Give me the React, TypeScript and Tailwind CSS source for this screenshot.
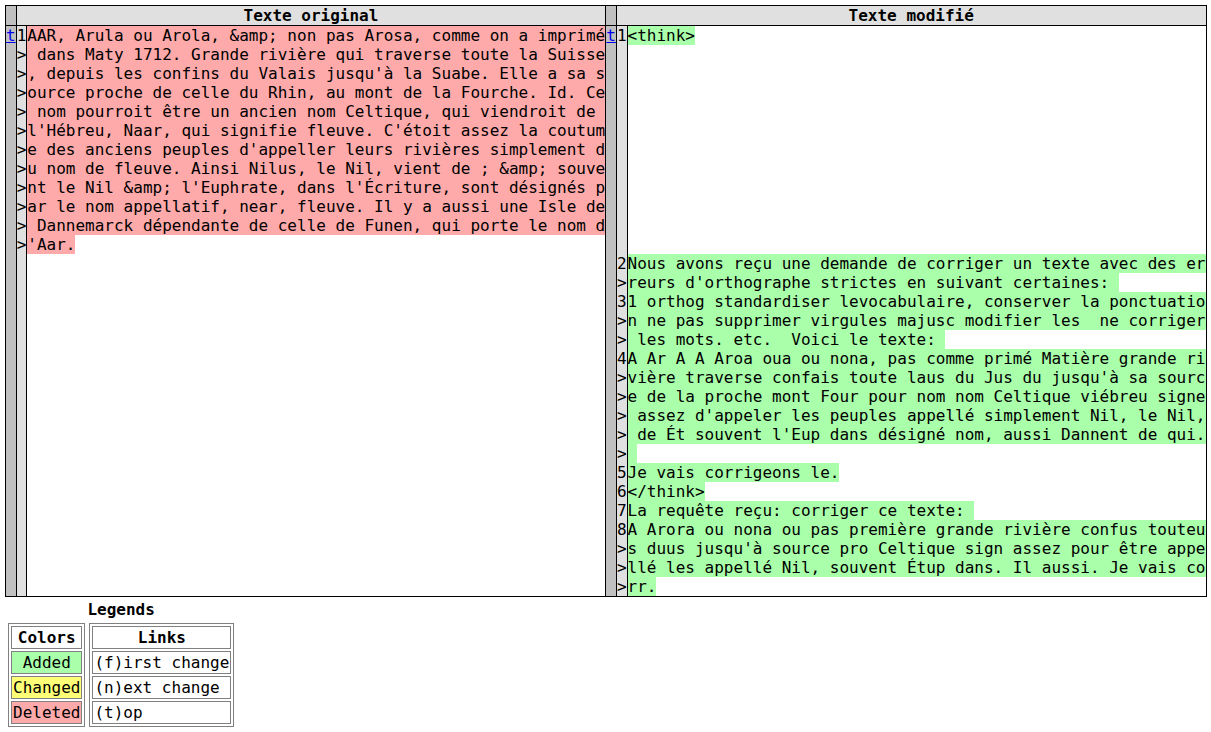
const original = [
  "AAR, Arula ou Arola, &amp; non pas Arosa, comme on a imprimé",
  " dans Maty 1712. Grande rivière qui traverse toute la Suisse",
  ", depuis les confins du Valais jusqu'à la Suabe. Elle a sa s",
  "ource proche de celle du Rhin, au mont de la Fourche. Id. Ce",
  " nom pourroit être un ancien nom Celtique, qui viendroit de ",
  "l'Hébreu, Naar, qui signifie fleuve. C'étoit assez la coutum",
  "e des anciens peuples d'appeller leurs rivières simplement d",
  "u nom de fleuve. Ainsi Nilus, le Nil, vient de ; &amp; souve",
  "nt le Nil &amp; l'Euphrate, dans l'Écriture, sont désignés p",
  "ar le nom appellatif, near, fleuve. Il y a aussi une Isle de",
  " Dannemarck dépendante de celle de Funen, qui porte le nom d",
  "'Aar.",
];

const modified: [string, string][] = [
  ['2', 'Nous avons reçu une demande de corriger un texte avec des er'],
  ['>', "reurs d'orthographe strictes en suivant certaines: "],
  ['3', '1 orthog standardiser levocabulaire, conserver la ponctuatio'],
  ['>', 'n ne pas supprimer virgules majusc modifier les  ne corriger'],
  ['>', ' les mots. etc.  Voici le texte: '],
  ['4', 'A Ar A A Aroa oua ou nona, pas comme primé Matière grande ri'],
  ['>', "vière traverse confais toute laus du Jus du jusqu'à sa sourc"],
  ['>', 'e de la proche mont Four pour nom nom Celtique viébreu signe'],
  ['>', " assez d'appeler les peuples appellé simplement Nil, le Nil,"],
  ['>', " de Ét souvent l'Eup dans désigné nom, aussi Dannent de qui."],
  ['>', ' '],
  ['5', 'Je vais corrigeons le.'],
  ['6', '</think>'],
  ['7', 'La requête reçu: corriger ce texte: '],
  ['8', 'A Arora ou nona ou pas première grande rivière confus touteu'],
  ['>', "s duus jusqu'à source pro Celtique sign assez pour être appe"],
  ['>', "llé les appellé Nil, souvent Étup dans. Il aussi. Je vais co"],
  ['>', 'rr.'],
];

type Cell = { num: string; text: string } | null;

function Side({ cell, top, kind }: { cell: Cell; top: boolean; kind: 'sub' | 'add' }) {
  return (
    <>
      <td className="bg-[#c0c0c0] border-l border-black p-0">
        {top && <a href="#top" className="text-[#0000ee] underline">t</a>}
      </td>
      <td className="bg-[#e0e0e0] border-l border-black p-0 text-right">{cell?.num}</td>
      <td className="border-l border-black p-0 whitespace-pre">
        {cell && (
          <span className={kind === 'sub' ? 'bg-[#ffaaaa]' : 'bg-[#aaffaa]'}>{cell.text}</span>
        )}
      </td>
    </>
  );
}

export default function App() {
  const rows = Array.from({ length: 30 }, (_, i) => {
    const left: Cell = i < original.length ? { num: i === 0 ? '1' : '>', text: original[i] } : null;
    let right: Cell = null;
    if (i === 0) right = { num: '1', text: '<think>' };
    else if (i >= 12) right = { num: modified[i - 12][0], text: modified[i - 12][1] };
    return { left, right };
  });

  return (
    <div className="pl-[5px] pt-[5px] font-['DejaVu_Sans_Mono',monospace] text-[16px] leading-[19px] text-black bg-white min-h-screen">
      <table className="border border-black border-collapse">
        <thead>
          <tr className="h-[20px]">
            <th className="bg-[#c0c0c0] border-b border-black p-0"></th>
            <th colSpan={2} className="bg-[#e0e0e0] border-b border-l border-black p-0 font-bold text-center">
              Texte original
            </th>
            <th className="bg-[#c0c0c0] border-b border-l border-black p-0"></th>
            <th colSpan={2} className="bg-[#e0e0e0] border-b border-l border-black p-0 font-bold text-center">
              Texte modifié
            </th>
          </tr>
        </thead>
        <tbody>
          {rows.map((r, i) => (
            <tr key={i} className="h-[19px]">
              <td className="bg-[#c0c0c0] p-0">
                {i === 0 && <a href="#top" className="text-[#0000ee] underline">t</a>}
              </td>
              <td className="bg-[#e0e0e0] border-l border-black p-0 text-right">{r.left?.num}</td>
              <td className="border-l border-black p-0 whitespace-pre">
                {r.left && <span className="bg-[#ffaaaa]">{r.left.text}</span>}
              </td>
              <Side cell={r.right} top={i === 0} kind="add" />
            </tr>
          ))}
        </tbody>
      </table>

      {/* Legends */}
      <table className="border-separate border-spacing-[2px]">
        <tbody>
          <tr>
            <th colSpan={2} className="p-px font-bold text-center">Legends</th>
          </tr>
          <tr>
            <td className="p-px align-top">
              <table className="border-separate border-spacing-[2px] border border-[#808080]">
                <tbody>
                  <tr>
                    <th className="p-px border border-[#808080] font-bold text-center">Colors</th>
                  </tr>
                  <tr>
                    <td className="p-px border border-[#808080] bg-[#aaffaa] whitespace-pre">{' Added '}</td>
                  </tr>
                  <tr>
                    <td className="p-px border border-[#808080] bg-[#ffff77]">Changed</td>
                  </tr>
                  <tr>
                    <td className="p-px border border-[#808080] bg-[#ffaaaa]">Deleted</td>
                  </tr>
                </tbody>
              </table>
            </td>
            <td className="p-px align-top">
              <table className="border-separate border-spacing-[2px] border border-[#808080]">
                <tbody>
                  <tr>
                    <th colSpan={2} className="p-px border border-[#808080] font-bold text-center">Links</th>
                  </tr>
                  <tr>
                    <td className="p-px border border-[#808080]">(f)irst change</td>
                  </tr>
                  <tr>
                    <td className="p-px border border-[#808080]">(n)ext change</td>
                  </tr>
                  <tr>
                    <td className="p-px border border-[#808080]">(t)op</td>
                  </tr>
                </tbody>
              </table>
            </td>
          </tr>
        </tbody>
      </table>
    </div>
  );
}
